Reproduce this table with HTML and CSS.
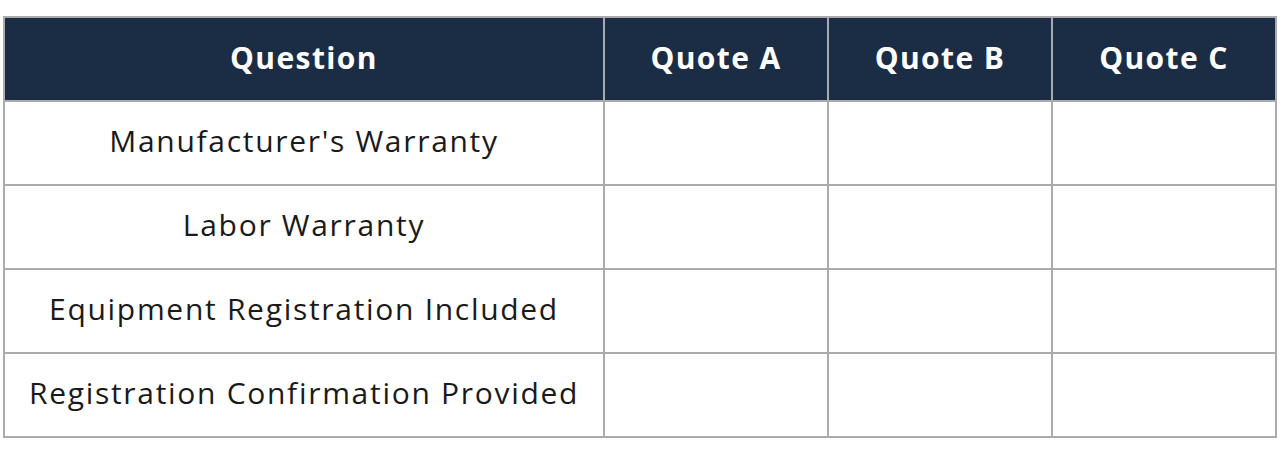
FILE: index.html
```html
<!DOCTYPE html>
<html>
<head>
<meta charset="utf-8">
<link rel="stylesheet" href="styles.css">
</head>
<body>
<table class="compare">
  <colgroup>
    <col class="c-q"><col class="c-a"><col class="c-a"><col class="c-a">
  </colgroup>
  <thead>
    <tr><th>Question</th><th>Quote A</th><th>Quote B</th><th>Quote C</th></tr>
  </thead>
  <tbody>
    <tr><td>Manufacturer's Warranty</td><td></td><td></td><td></td></tr>
    <tr><td>Labor Warranty</td><td></td><td></td><td></td></tr>
    <tr><td>Equipment Registration Included</td><td></td><td></td><td></td></tr>
    <tr><td>Registration Confirmation Provided</td><td></td><td></td><td></td></tr>
  </tbody>
</table>
</body>
</html>
```
FILE: styles.css
```css
html, body {
  margin: 0;
  padding: 0;
  background: #ffffff;
}
body {
  padding: 16px 3px 0 3px;
  font-family: "Open Sans", "DejaVu Sans", sans-serif;
}
.compare {
  width: 1274px;
  border-collapse: collapse;
  table-layout: fixed;
}
.c-q { width: 600px; }
.c-a { width: 224px; }
.compare th,
.compare td {
  border: 2px solid #ababab;
  padding: 0;
  text-align: center;
  vertical-align: middle;
  font-size: 30px;
}
.compare th {
  height: 78px;
  padding-bottom: 4px;
  background: #1b2d45;
  color: #ffffff;
  font-weight: 700;
  letter-spacing: 1.4px;
}
.compare td {
  height: 76px;
  padding-bottom: 6px;
  color: #1a1a1a;
  font-weight: 400;
  letter-spacing: 1.7px;
}
```
